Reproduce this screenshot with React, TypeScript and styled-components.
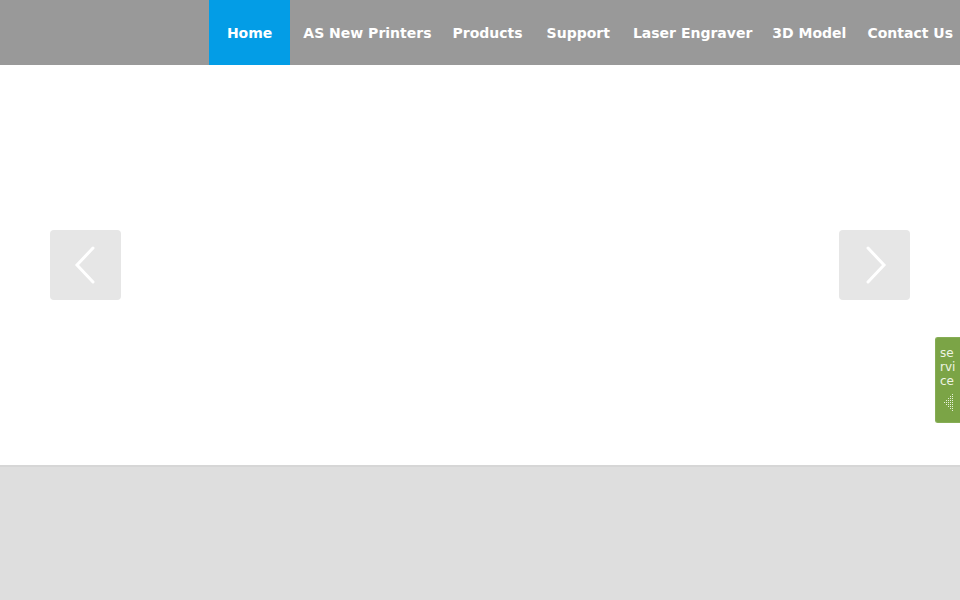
import styled, { createGlobalStyle } from "styled-components";

const GlobalStyle = createGlobalStyle`
  html, body {
    margin: 0;
    padding: 0;
    background: #dedede;
    font-family: "DejaVu Sans", "Liberation Sans", sans-serif;
  }
`;

const Page = styled.div`
  width: 960px;
  height: 600px;
  display: flex;
  flex-direction: column;
  overflow: hidden;
  position: relative;
`;

const TopBar = styled.header`
  height: 65px;
  background: #999999;
  display: flex;
  justify-content: flex-end;
  flex-shrink: 0;
`;

const Nav = styled.nav`
  display: flex;
  height: 100%;
`;

const NavItem = styled.a<{ $active?: boolean; $pad: string }>`
  display: flex;
  align-items: center;
  height: 100%;
  padding: ${(p) => p.$pad};
  background: ${(p) => (p.$active ? "#039de6" : "transparent")};
  color: #ffffff;
  font-weight: bold;
  font-size: 14px;
  text-decoration: none;
  white-space: nowrap;
  box-sizing: border-box;
`;

const Slider = styled.section`
  height: 400px;
  background: #ffffff;
  display: flex;
  align-items: center;
  justify-content: space-between;
  padding: 0 50px;
  flex-shrink: 0;
`;

const ArrowButton = styled.button`
  width: 71px;
  height: 70px;
  border: none;
  border-radius: 4px;
  background: #e6e6e6;
  display: flex;
  align-items: center;
  justify-content: center;
  padding: 0;
  cursor: pointer;
`;

const Footer = styled.footer`
  flex: 1;
  background: #dedede;
  border-top: 2px solid #d6d6d6;
`;

const ServiceTab = styled.div`
  position: absolute;
  right: 0;
  top: 337px;
  width: 25px;
  height: 86px;
  background: #7ba446;
  border: 1px solid #86ad55;
  border-right: none;
  border-radius: 3px 0 0 3px;
  display: flex;
  flex-direction: column;
  align-items: flex-start;
  padding: 8px 0 0 4px;
  box-sizing: border-box;
`;

const ServiceText = styled.span`
  color: #eef4e4;
  font-size: 12px;
  line-height: 14px;
  width: 16px;
  word-break: break-all;
`;

// dotted "collapse" triangle pointing left
const DotArrow = () => (
  <svg width="10" height="18" viewBox="0 0 10 18" style={{ marginTop: 6, marginLeft: 3 }}>
    {[0, 1, 2, 3, 4].map((col) =>
      Array.from({ length: 2 * col + 1 }).map((_, i) => (
        <rect
          key={`${col}-${i}`}
          x={1 + col * 2}
          y={8 - col * 2 + i * 2}
          width="1"
          height="1"
          fill="#e8f0dc"
        />
      ))
    )}
  </svg>
);

const Chevron = ({ dir }: { dir: "left" | "right" }) => (
  <svg width="30" height="40" viewBox="0 0 30 40">
    <polyline
      points={dir === "left" ? "22,3 6,20 22,37" : "8,3 24,20 8,37"}
      fill="none"
      stroke="#ffffff"
      strokeWidth="3"
      strokeLinecap="round"
    />
  </svg>
);

const links = [
  { label: "Home", pad: "0 18px", active: true },
  { label: "AS New Printers", pad: "0 10px 0 13px" },
  { label: "Products", pad: "0 12px 0 11px" },
  { label: "Support", pad: "0 11px 0 12px" },
  { label: "Laser Engraver", pad: "0 9px 0 12px" },
  { label: "3D Model", pad: "0 11px 0 11px" },
  { label: "Contact Us", pad: "0 7px 0 10px" },
];

export default function App() {
  return (
    <>
      <GlobalStyle />
      <Page>
        <TopBar>
          <Nav>
            {links.map((l) => (
              <NavItem key={l.label} href="#" $active={l.active} $pad={l.pad}>
                {l.label}
              </NavItem>
            ))}
          </Nav>
        </TopBar>
        <Slider>
          <ArrowButton aria-label="previous">
            <Chevron dir="left" />
          </ArrowButton>
          <ArrowButton aria-label="next">
            <Chevron dir="right" />
          </ArrowButton>
        </Slider>
        <Footer />
        <ServiceTab>
          <ServiceText>service</ServiceText>
          <DotArrow />
        </ServiceTab>
      </Page>
    </>
  );
}
